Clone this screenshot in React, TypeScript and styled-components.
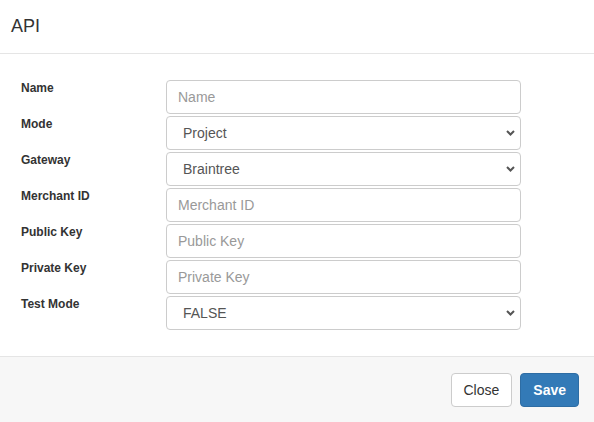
import styled, { createGlobalStyle } from "styled-components";
import { Fragment, useState } from "react";

const GlobalStyle = createGlobalStyle`
  html, body {
    margin: 0;
    padding: 0;
    background: #ffffff;
  }
  body {
    font-family: "Liberation Sans", Arial, sans-serif;
    color: #333333;
  }
  * {
    box-sizing: border-box;
  }
`;

const Modal = styled.div`
  width: 594px;
  height: 422px;
  display: flex;
  flex-direction: column;
  background: #ffffff;
`;

const Header = styled.div`
  padding: 14px 11px;
  border-bottom: 1px solid #e5e5e5;
`;

const Title = styled.h4`
  margin: 0;
  font-size: 18px;
  line-height: 25px;
  font-weight: 500;
  color: #333333;
`;

const Body = styled.div`
  padding: 26px 21px;
  display: grid;
  grid-template-columns: 145px 355px;
  row-gap: 2px;
`;

const Label = styled.label`
  font-size: 12px;
  font-weight: bold;
  line-height: 17px;
  color: #333333;
`;

const Input = styled.input`
  width: 100%;
  height: 34px;
  padding: 6px 11px;
  font-family: inherit;
  font-size: 14px;
  color: #555555;
  background: #ffffff;
  border: 1px solid #cccccc;
  border-radius: 4px;
  outline: none;

  &::placeholder {
    color: #999999;
  }
`;

const SelectWrap = styled.div`
  position: relative;
  width: 100%;
`;

const Select = styled.select`
  width: 100%;
  height: 34px;
  padding: 6px 30px 6px 16px;
  font-family: inherit;
  font-size: 14px;
  color: #555555;
  background: #ffffff;
  border: 1px solid #cccccc;
  border-radius: 4px;
  appearance: none;
  outline: none;
`;

const Chevron = styled.svg`
  position: absolute;
  right: 6px;
  top: 14px;
  width: 9px;
  height: 6px;
  pointer-events: none;
`;

const Footer = styled.div`
  flex: 1;
  display: flex;
  justify-content: flex-end;
  align-items: flex-start;
  gap: 8px;
  padding: 16px 15px;
  background: #f7f7f7;
  border-top: 1px solid #e5e5e5;
`;

const Button = styled.button<{ $primary?: boolean }>`
  height: 34px;
  padding: 6px 12px;
  font-family: inherit;
  font-size: 14px;
  font-weight: ${(p) => (p.$primary ? "bold" : "normal")};
  color: ${(p) => (p.$primary ? "#ffffff" : "#333333")};
  background: ${(p) => (p.$primary ? "#337ab7" : "#ffffff")};
  border: 1px solid ${(p) => (p.$primary ? "#2e6da4" : "#cccccc")};
  border-radius: 4px;
  cursor: pointer;
`;

type Field =
  | { label: string; kind: "input" }
  | { label: string; kind: "select"; options: string[] };

const fields: Field[] = [
  { label: "Name", kind: "input" },
  { label: "Mode", kind: "select", options: ["Project", "Global"] },
  { label: "Gateway", kind: "select", options: ["Braintree", "Stripe", "PayPal"] },
  { label: "Merchant ID", kind: "input" },
  { label: "Public Key", kind: "input" },
  { label: "Private Key", kind: "input" },
  { label: "Test Mode", kind: "select", options: ["FALSE", "TRUE"] },
];

const App = () => {
  const [values, setValues] = useState<Record<string, string>>({});

  const handleChange = (label: string, value: string) => {
    setValues((prev) => ({ ...prev, [label]: value }));
  };

  return (
    <Modal>
      <GlobalStyle />
      <Header>
        <Title>API</Title>
      </Header>
      <Body>
        {fields.map((field) => (
          <Fragment key={field.label}>
            <Label>{field.label}</Label>
            {field.kind === "input" ? (
              <Input
                placeholder={field.label}
                value={values[field.label] ?? ""}
                onChange={(e) => handleChange(field.label, e.target.value)}
              />
            ) : (
              <SelectWrap>
                <Select
                  value={values[field.label] ?? field.options[0]}
                  onChange={(e) => handleChange(field.label, e.target.value)}
                >
                  {field.options.map((opt) => (
                    <option key={opt} value={opt}>
                      {opt}
                    </option>
                  ))}
                </Select>
                <Chevron viewBox="0 0 9 6">
                  <path
                    d="M1 1 L4.5 4.5 L8 1"
                    fill="none"
                    stroke="#555555"
                    strokeWidth="2"
                  />
                </Chevron>
              </SelectWrap>
            )}
          </Fragment>
        ))}
      </Body>
      <Footer>
        <Button>Close</Button>
        <Button $primary>Save</Button>
      </Footer>
    </Modal>
  );
};

export default App;
